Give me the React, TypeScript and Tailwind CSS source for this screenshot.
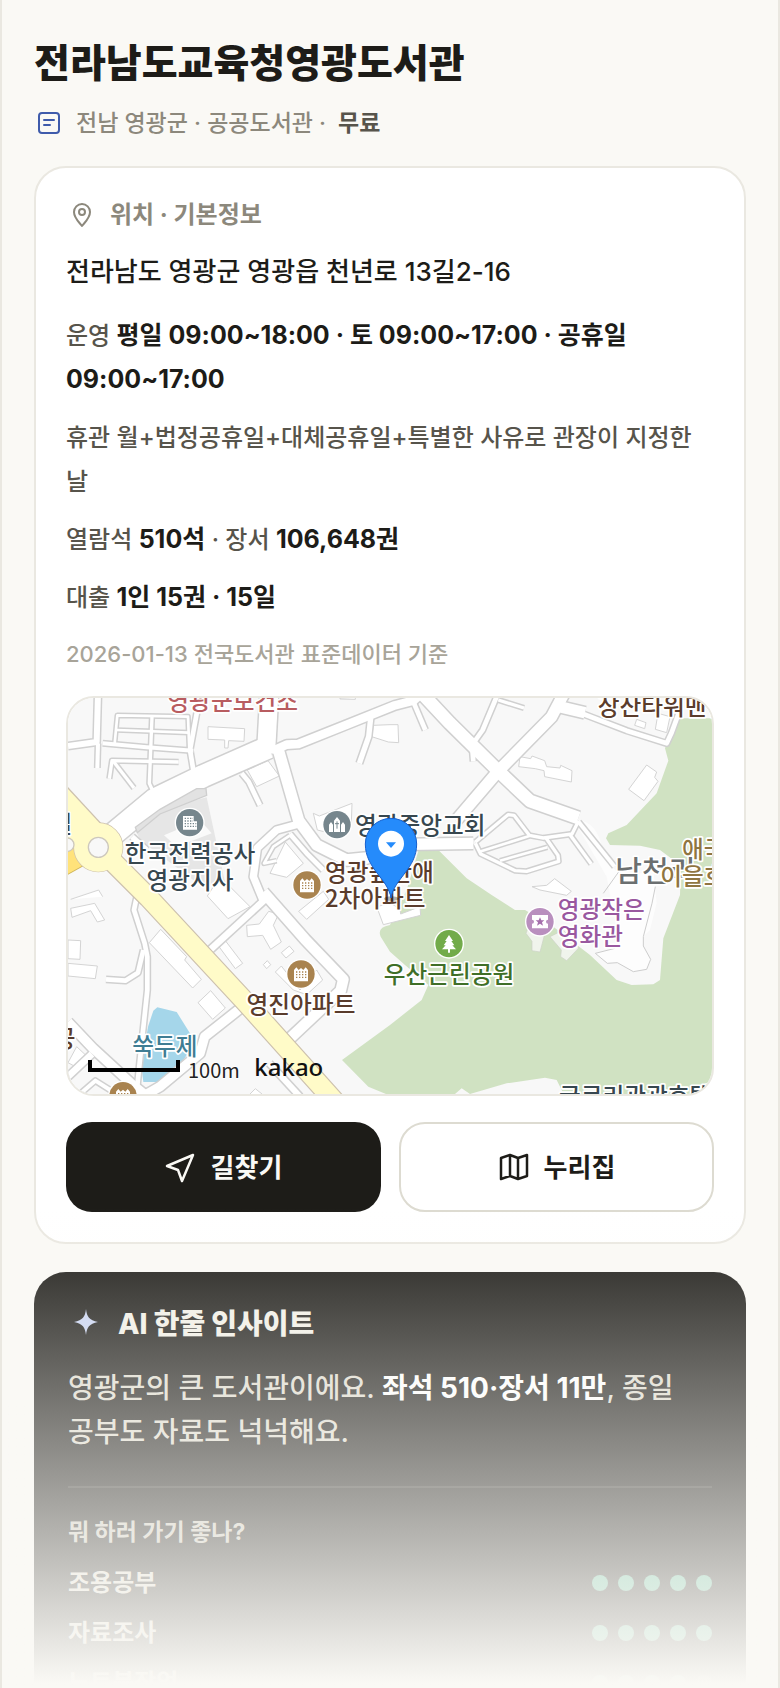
import type { ReactNode } from "react";

const activities = [
  { name: "조용공부", score: 5 },
  { name: "자료조사", score: 5 },
  { name: "노트북작업", score: 4 },
];

// white roads: [path, width]
const roads: [string, number][] = [
  // main road and its branches
  ["M150 440 L285 328 L430 258 L625 172", 66],
  ["M618 190 L628 10", 54],
  ["M640 182 L680 164 L715 162 L860 104 L1005 46 L1060 32 L1085 10", 26],
  ["M655 180 L716 392 L770 465 L860 510 L920 504 L990 464 L1240 460", 34],
  ["M716 402 L650 420 L592 474 L580 560 L608 628", 22],
  ["M610 606 L735 748 L850 868 L842 902 L690 1045", 32],
  ["M622 622 L452 778", 20],
  ["M1082 6 L1170 100 L1315 243 L1410 333 L1555 384", 38],
  ["M1188 392 L1315 243 L1475 80 L1512 10", 34],
  ["M1480 46 L1575 68", 34],
  ["M1570 72 L1700 122 L1820 160 L1834 130 L1856 70", 14],
  ["M1310 20 L1268 120 L1236 165 L1240 214", 14],
  ["M1315 30 L1392 54", 10],
  ["M1062 40 L1096 120", 14],
  ["M932 84 L926 140 L898 220", 16],
  ["M545 250 L566 275 L600 346", 14],
  ["M24 168 L110 156 L114 10", 18],
  ["M114 160 L112 234", 12],
  // grid in the top left corner
  ["M412 60 L390 180 L400 240", 14],
  ["M128 160 L260 172 L400 182", 12],
  ["M164 160 L172 76 L384 80 L388 180", 8],
  ["M170 120 L386 128", 8],
  ["M276 80 L268 280 L280 306", 10],
  ["M148 266 L156 212 L356 216", 10],
  ["M160 214 L222 294", 10],
  // parking loops on the right
  ["M1246 456 L1344 374 L1362 376 L1408 436 L1450 444 L1536 432 L1556 392", 10],
  ["M1408 438 L1256 486", 8],
  ["M1246 460 L1262 492 L1366 542 L1400 544 L1496 514 L1494 496 L1458 444", 10],
  ["M1462 472 L1320 512", 8],
  ["M1530 434 L1594 522", 10],
  ["M1556 396 L1664 530", 12],
  // lower left
  ["M232 612 L222 660 L254 760 L262 800 L262 900 L246 1050 L230 1206", 14],
  ["M250 780 L234 848 L196 872 L138 868", 14],
  ["M24 996 L100 1076 L220 1186 L250 1210", 28],
  ["M540 956 L434 1040 L420 1090 L300 1190 L230 1230", 28],
  ["M24 1160 L96 1092", 20],
  ["M60 1212 L106 1172 L160 1206", 12],
  ["M628 1120 L720 1220", 18],
  ["M216 440 L260 480", 16],
  ["M690 432 L740 490 L790 540", 14],
  ["M650 512 L612 520 L640 470 L690 436", 8],
];

const buildings = [
  "M444 110 L554 116 L552 154 L506 152 L504 174 L494 174 L494 150 L444 148 Z",
  "M562 240 L624 212 L658 258 L590 290 Z",
  "M760 370 L778 378 L876 340 L874 400 L820 432 L772 420 Z",
  "M676 456 L730 520 L680 562 L630 550 Z",
  "M840 24 L886 22 L886 28 L840 27 Z",
  "M990 104 L1014 104 L1016 158 L985 156 L935 140 L940 106 Z",
  "M1380 200 L1412 206 L1416 198 L1454 212 L1460 230 L1500 234 L1502 226 L1536 242 L1534 276 L1454 260 L1452 242 L1426 236 L1376 230 Z",
  "M1760 225 L1790 246 L1784 262 L1794 274 L1752 332 L1706 298 Z",
  "M1730 88 L1758 98 L1754 116 L1724 106 Z",
  "M1794 70 L1830 80 L1820 128 L1786 118 Z",
  "M480 560 L570 650 L504 686 L442 618 Z",
  "M32 655 L104 640 L134 690 L112 696 L92 662 L36 682 Z",
  "M32 628 L116 600 L128 620",
  "M24 750 L62 752 L60 808 L24 806 Z",
  "M24 820 L112 828 L106 866 L24 858 Z",
  "M302 718 L380 800 L374 810 L424 868 L398 894 L268 758 Z",
  "M474 766 L496 752 L548 820 L526 836 Z",
  "M414 938 L452 902 L496 954 L458 988 Z",
  "M560 706 L598 702 L626 664 L656 672 L640 706 L664 756 L632 778 L608 736 L562 740 Z",
  "M664 788 L688 768 L702 784 L678 804 Z",
  "M610 824 L622 812 L632 824 L620 836 Z",
  "M646 846 L664 828 L720 900 L770 840 L788 870 L740 914 L700 900 Z",
  "M716 664 L790 604 L806 628 L740 688 Z",
  "M950 650 L990 640 L1020 655 L1022 672 L1080 650 L1082 676 L970 704 Z",
  "M1416 590 L1460 586 L1484 566 L1534 604 L1520 616 L1440 600 Z",
  "M24 1118 L50 1070 L80 1098 L46 1130 Z",
  "M570 1212 L586 1196 L606 1212",
];

function Road() {
  return (
    <g fill="none" strokeLinejoin="round">
      {roads.map(([d, w]) => (
        <path key={d} d={d} stroke="#d0d0d0" strokeWidth={w + 9} />
      ))}
      {roads.map(([d, w]) => (
        <path key={d} d={d} stroke="#fff" strokeWidth={w} />
      ))}
    </g>
  );
}

function Poi({ x, y, color, children }: { x: number; y: number; color: string; children: ReactNode }) {
  return (
    <g transform={`translate(${x} ${y})`}>
      <circle r="45" fill="#fff" />
      <circle r="41" fill={color} />
      {children}
    </g>
  );
}

function ApartmentGlyph() {
  return (
    <>
      <path d="M-21 22 V-12 L-14 -20 L-7 -12 L0 -18 L7 -12 L14 -20 L21 -12 V22 Z" fill="#fff" />
      <path d="M-15 -6 H17 M-15 2 H17 M-15 10 H17" stroke="#a9834f" strokeWidth="4" strokeDasharray="4 5" />
    </>
  );
}

function LibraryMap() {
  return (
    <svg viewBox="24 24 1932 1188" preserveAspectRatio="xMidYMid slice" className="block h-full w-full" role="img" aria-label="지도">
      <rect x="0" y="0" width="2000" height="1300" fill="#f8f8f8" />
      {/* blocks */}
      <path d="M225 415 L300 358 L440 322 L500 600 L400 570 L240 450 Z" fill="#e6e6e6" />
      <path d="M312 436 L420 390 L455 430 L350 470 Z" fill="#fafafa" />
      <path d="M1075 483 L1135 480 L1220 565 L1295 615 L1365 660 L1395 660 L1480 710 L1590 795 L1670 870 L1715 885 L1780 883 L1800 870 L1810 745 L1860 615 L1862 550 L1840 510 L1800 480 L1740 467 L1650 465 L1638 445 L1645 430 L1700 405 L1790 310 L1825 212 L1815 175 L1850 85 L1960 85 V1230 H1520 L1490 1170 L1455 1163 L1340 1180 L1230 1212 L1205 1195 L1185 1212 V1230 H985 V1215 L925 1190 L846 1110 L990 1005 L1085 930 L1105 885 L1035 825 L990 785 L962 740 Q950 712 990 705 L1040 600 Z" fill="#d0e2c2" />
      <path d="M1398 730 L1410 700 L1460 710 L1440 786 L1416 782 L1416 754 Z M1470 740 L1510 720 L1556 774 L1520 812 L1502 800 L1504 780 Z" fill="#f0f4ec" stroke="#ccd2c6" strokeWidth="2" />
      <path d="M1540 388 Q1600 390 1620 450 Q1640 540 1700 560 L1780 540 L1790 640 L1770 720 L1750 740 L1750 770 L1772 810 L1760 838 L1720 845 L1672 818 L1642 820 L1606 790 L1680 770 L1640 560 Z" fill="#fdfdfd" />
      <path d="M1630 610 L1680 540 L1740 520 M1786 590 L1776 640 L1750 740 L1750 768 L1772 808 L1760 838 L1720 845 L1672 818 L1642 820 L1606 790 L1665 775" fill="none" stroke="#cdcdcd" strokeWidth="3" />
      {/* pond */}
      <path d="M292 952 L350 966 L390 1030 L380 1095 L340 1160 L300 1176 L250 1176 L244 1130 L264 1010 L280 962 Z" fill="#a5d6ea" />
      <g fill="#fff" stroke="#d4d4d4" strokeWidth="3">
        {buildings.map((d) => (
          <path key={d} d={d} />
        ))}
      </g>
      <Road />
      <path d="M226 412 L300 358 L410 296 L438 296 L440 316 L300 372 L232 428 Z" fill="#e2e2e2" stroke="#cfcfcf" strokeWidth="4" />
      {/* avenue and roundabout */}
      <path d="M0 530 L90 480" stroke="#cfb65c" strokeWidth="66" />
      <path d="M0 530 L90 480" stroke="#ffe27a" strokeWidth="60" />
      <g stroke="#cdc1ae" fill="none">
        <path d="M-30 315 L115 472" strokeWidth="112" />
        <path d="M115 472 L265 622 L553 932 L838 1250" strokeWidth="64" />
        <circle cx="115" cy="472" r="73" strokeWidth="4" />
      </g>
      <g stroke="#fffbc8" fill="none">
        <path d="M-30 315 L115 472" strokeWidth="104" />
        <path d="M115 472 L265 622 L553 932 L838 1250" strokeWidth="57" />
        <circle cx="115" cy="472" r="52" strokeWidth="42" />
      </g>
      <circle cx="115" cy="472" r="30" fill="#f8f8f8" stroke="#cdc8bd" strokeWidth="4" />
      <circle cx="22" cy="464" r="20" fill="#f8f8f8" stroke="#cdc8bd" strokeWidth="4" />

      <Poi x={389} y={398} color="#76868d">
        <path d="M-20 21 V-20 H12 V-4 H22 V21 Z" fill="#fff" />
        <path d="M-15 -13 H10 M-15 -5 H10 M-15 3 H20 M-15 11 H20" stroke="#76868d" strokeWidth="4" strokeDasharray="4 4" />
      </Poi>
      <Poi x={831} y={404} color="#76868d">
        <path d="M-24 22 V0 L-18 -8 L-12 0 V22 Z M12 22 V0 L18 -8 L24 0 V22 Z M-9 22 V-12 L0 -23 L9 -12 V22 Z" fill="#fff" />
        <path d="M0 -10 V12 M-6 -3 H6" stroke="#76868d" strokeWidth="3" />
      </Poi>
      <Poi x={741} y={585} color="#a9834f"><ApartmentGlyph /></Poi>
      <Poi x={723} y={852} color="#a9834f"><ApartmentGlyph /></Poi>
      <Poi x={189} y={1217} color="#a9834f"><ApartmentGlyph /></Poi>
      <Poi x={1167} y={761} color="#72ab4a">
        <path d="M0 -26 L12 -8 H7 L16 5 H10 L21 17 H3 V27 H-3 V17 H-21 L-10 5 H-16 L-7 -8 H-12 Z" fill="#fff" />
      </Poi>
      <Poi x={1440} y={695} color="#b98fbe">
        <path d="M-24 -20 H24 V-6 A6 6 0 0 0 24 6 V20 H-24 V6 A6 6 0 0 0 -24 -6 Z" fill="#fff" />
        <path d="M0 -13 L4 -4 L13 -4 L6 2 L9 12 L0 6 L-9 12 L-6 2 L-13 -4 L-4 -4 Z" fill="#a56fac" />
      </Poi>

      <g className="font-['Noto_Sans_CJK_KR',sans-serif] font-medium" fontSize="71" stroke="#fff" strokeWidth="10" strokeLinejoin="round" paintOrder="stroke">
        <g textAnchor="middle">
          <text x="518" y="61" fill="#b85c60">영광군보건소</text>
          <text x="390" y="517" fill="#37474f">한국전력공사</text>
          <text x="390" y="597" fill="#37474f">영광지사</text>
          <text x="723" y="969" fill="#5a3c2c">영진아파트</text>
          <text x="315" y="1096" fill="#3f7d94">쑥두제</text>
          <text x="1167" y="878" fill="#3f6f28">우산근린공원</text>
          <text x="14" y="1071" fill="#5a3c2c">공</text>
          <text x="4" y="428" fill="#37474f">길</text>
        </g>
        <text x="885" y="431" fill="#37474f">영광중앙교회</text>
        <text x="795" y="573" fill="#5a3c2c">영광숲안애</text>
        <text x="795" y="651" fill="#5a3c2c">2차아파트</text>
        <text x="1613" y="76" fill="#5a3c2c">장산타워맨션</text>
        <text x="1666" y="577" fill="#6b6f70" fontSize="87">남천리</text>
        <text x="1866" y="504" fill="#8f7541">애국</text>
        <text x="1801" y="586" fill="#8f7541">이을호</text>
        <text x="1493" y="684" fill="#99589f">영광작은</text>
        <text x="1493" y="766" fill="#99589f">영화관</text>
        <text x="1497" y="1244" fill="#37474f">글로리관광호텔</text>
      </g>

      {/* marker */}
      <ellipse cx="994" cy="626" rx="22" ry="7" fill="#000" opacity="0.3" />
      <path d="M993 624 C984 566 916 536 916 462 A77 77 0 0 1 1070 462 C1070 536 1002 566 993 624 Z" fill="#258bfb" stroke="#1560cf" strokeWidth="3" />
      <circle cx="993" cy="461" r="39" fill="#fff" />
      <path d="M978 457 H1008 L993 474 Z" fill="#258bfb" />

      {/* scale */}
      <path d="M90 1110 V1140 H354 V1110" fill="none" stroke="#000" strokeWidth="12" />
      <text x="384" y="1163" fontSize="60" fill="#222" stroke="#fff" strokeWidth="4" paintOrder="stroke" className="font-['Noto_Sans_CJK_KR',sans-serif] font-normal">100m</text>
      <text x="583" y="1158" fontSize="72" fill="#111" className="font-['Noto_Sans',sans-serif] font-medium">kakao</text>
    </svg>
  );
}

function Row({ children }: { children: ReactNode }) {
  return <p className="text-2xl leading-[44px] font-medium text-[#57544b]">{children}</p>;
}

function Em({ children }: { children: ReactNode }) {
  return <strong className="text-[25px] leading-none font-bold text-[#1d1c18]">{children}</strong>;
}

export default function App() {
  return (
    <div className="relative max-h-screen overflow-hidden border-x-2 border-[#eae8e1] bg-[#faf9f5] font-[Inter,'Noto_Sans_CJK_KR',sans-serif] break-keep text-[#1d1c18]">
      <main className="px-8 pt-9 pb-10">
        <h1 className="text-[39px] leading-[54px] font-extrabold">전라남도교육청영광도서관</h1>
        <div className="mt-4 flex items-center gap-3 text-[23px] leading-[34px] font-medium text-[#8c887c]">
          <svg viewBox="0 0 30 30" className="size-[30px]" fill="none" stroke="#3f5bab" strokeWidth="2" strokeLinecap="round">
            <rect x="5" y="5" width="20" height="20" rx="3" />
            <path d="M10 12 H20 M10 17 H16" />
          </svg>
          <span>전남 영광군 · 공공도서관 ·</span>
          <strong className="font-bold text-[#57544b]">무료</strong>
        </div>

        <section className="mt-[26px] rounded-[32px] border-2 border-[#eae8e1] bg-white px-[30px] pt-7 pb-[30px]">
          <h2 className="flex items-center gap-3 text-2xl leading-[38px] font-bold text-[#8c887c]">
            <svg viewBox="0 0 32 32" className="size-8" fill="none" stroke="currentColor" strokeWidth="2" strokeLinejoin="round">
              <path d="M16 27 C13 23 8 19 8 13 A8 8 0 0 1 24 13 C24 19 19 23 16 27 Z" />
              <circle cx="16" cy="13" r="3" />
            </svg>
            위치 · 기본정보
          </h2>
          <p className="mt-4 mb-5 text-[26px] leading-[44px] font-medium">전라남도 영광군 영광읍 천년로 13길2-16</p>
          <div className="flex flex-col gap-[14px]">
            <Row>운영 <Em>평일 09:00~18:00 · 토 09:00~17:00 · 공휴일 09:00~17:00</Em></Row>
            <Row>휴관 월+법정공휴일+대체공휴일+특별한 사유로 관장이 지정한 날</Row>
            <Row>열람석 <Em>510석</Em> · 장서 <Em>106,648권</Em></Row>
            <Row>대출 <Em>1인 15권 · 15일</Em></Row>
          </div>
          <p className="mt-4 text-[22px] leading-9 font-medium text-[#a8a499]">2026-01-13 전국도서관 표준데이터 기준</p>

          <div className="mt-6 h-[400px] overflow-hidden rounded-[28px] border-2 border-[#eae8e1]">
            <LibraryMap />
          </div>

          <div className="mt-[26px] grid grid-cols-2 gap-[18px] text-[26px] font-bold">
            <a href="#directions" className="flex h-[90px] items-center justify-center gap-[14px] rounded-[26px] bg-[#1d1c18] text-[#faf9f5]">
              <svg viewBox="0 0 32 32" className="size-8" fill="none" stroke="currentColor" strokeWidth="2.5" strokeLinejoin="round">
                <path d="M28 4 L2 15 L13 19 L17 30 Z" />
              </svg>
              길찾기
            </a>
            <a href="#homepage" className="flex h-[90px] items-center justify-center gap-[14px] rounded-[26px] border-2 border-[#dddbd1] bg-white">
              <svg viewBox="0 0 32 32" className="size-8" fill="none" stroke="currentColor" strokeWidth="2.5" strokeLinejoin="round">
                <path d="M3 7 L12 4 L20 7 L29 4 V25 L20 28 L12 25 L3 28 Z M12 4 V25 M20 7 V28" />
              </svg>
              누리집
            </a>
          </div>
        </section>

        <section className="mt-7 rounded-[32px] bg-[#1d1c18] px-[34px] pt-[34px] pb-10">
          <h2 className="flex items-center gap-[14px] text-[28px] leading-[34px] font-extrabold text-[#f1efe6]">
            <svg viewBox="0 0 36 36" className="size-9" fill="#c9d4f2">
              <path d="M18 3 C19 11 21 14 30 16 C21 18 19 21 18 29 C17 21 15 18 6 16 C15 14 17 11 18 3 Z" />
            </svg>
            AI 한줄 인사이트
          </h2>
          <p className="mt-6 text-[28px] leading-[44px] font-medium text-[#dddacd]">
            영광군의 큰 도서관이에요. <strong className="font-bold text-white">좌석 510·장서 11만</strong>, 종일 공부도 자료도 넉넉해요.
          </p>
          <div className="mt-8 border-t-2 border-[#35342f] pt-7">
            <h3 className="text-[23px] leading-8 font-bold text-[#c9c6ba]">뭐 하러 가기 좋나?</h3>
            <ul className="mt-[10px]">
              {activities.map((a) => (
                <li key={a.name} className="flex h-[50px] items-center justify-between text-2xl font-semibold text-[#dddacd]">
                  {a.name}
                  <span className="flex gap-[10px]">
                    {[1, 2, 3, 4, 5].map((n) => (
                      <span key={n} className={`size-4 rounded-full ${n <= a.score ? "bg-[#5bb896]" : "bg-[#45443e]"}`} />
                    ))}
                  </span>
                </li>
              ))}
            </ul>
          </div>
        </section>
      </main>
      <div className="pointer-events-none absolute inset-x-0 bottom-0 h-[480px] bg-linear-to-b from-[#faf9f5]/0 to-[#faf9f5] to-99%" />
    </div>
  );
}
